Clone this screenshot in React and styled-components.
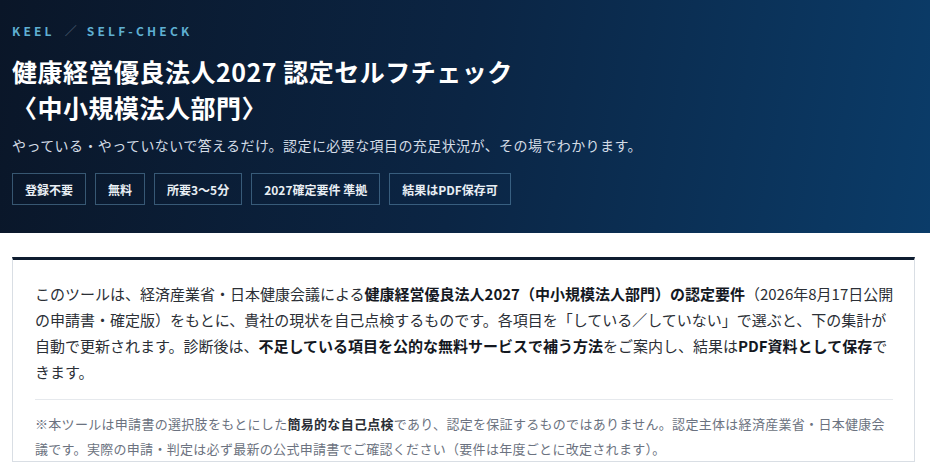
import React from "react"
import styled, { createGlobalStyle } from "styled-components"

const GlobalStyle = createGlobalStyle`
  html, body {
    margin: 0;
    padding: 0;
    background: #ffffff;
    font-family: "Noto Sans CJK JP", "Noto Sans", sans-serif;
  }
`

const Hero = styled.header`
  background: linear-gradient(100deg, #0a1628 0%, #0b2544 50%, #0b3c69 100%);
  padding: 22px 12px 28px;
  color: #ffffff;
`

const Crumb = styled.div`
  display: flex;
  align-items: center;
  gap: 10px;
  font-size: 12px;
  line-height: 18px;
  font-weight: 700;
  letter-spacing: 3.2px;
  color: #5fb0d2;
`

const CrumbSep = styled.span`
  color: #4a5d72;
  font-weight: 400;
  letter-spacing: 0;
`

const Title = styled.h1`
  margin: 13px 0 0;
  font-size: 25px;
  line-height: 36px;
  font-weight: 700;
  letter-spacing: 0.02em;
`

const Lead = styled.p`
  margin: 9px 0 0;
  font-size: 14px;
  line-height: 22px;
  letter-spacing: 0.03em;
  color: #d3dce6;
`

const Tags = styled.ul`
  display: flex;
  gap: 9px;
  margin: 17px 0 0;
  padding: 0;
  list-style: none;
`

const Tag = styled.li`
  border: 1px solid rgba(110, 165, 200, 0.45);
  padding: 0 12px;
  height: 30px;
  display: flex;
  align-items: center;
  font-size: 12px;
  font-weight: 700;
  color: #e8eef4;
`

const Card = styled.section`
  margin: 24px 15px 0 12px;
  border: 1px solid #d9dee4;
  border-top: 3px solid #0f1d30;
  padding: 21px 17px 0 22px;
`

const Intro = styled.p`
  margin: 0;
  font-size: 15px;
  line-height: 26px;
  color: #2b2f36;

  strong {
    font-weight: 700;
    color: #14181f;
  }
`

const Note = styled.p`
  margin: 14px 4px 0 0;
  padding-top: 11px;
  border-top: 1px solid #e6e9ed;
  font-size: 13px;
  line-height: 25px;
  letter-spacing: 0.3px;
  color: #6b7280;

  strong {
    font-weight: 700;
    color: #2b2f36;
  }
`

const tags = ["登録不要", "無料", "所要3〜5分", "2027確定要件 準拠", "結果はPDF保存可"]

const App = () => (
  <>
    <GlobalStyle />
    <Hero>
      <Crumb>
        <span>KEEL</span>
        <CrumbSep>／</CrumbSep>
        <span>SELF-CHECK</span>
      </Crumb>
      <Title>
        健康経営優良法人2027 認定セルフチェック
        <br />
        〈中小規模法人部門〉
      </Title>
      <Lead>やっている・やっていないで答えるだけ。認定に必要な項目の充足状況が、その場でわかります。</Lead>
      <Tags>
        {tags.map(t => (
          <Tag key={t}>{t}</Tag>
        ))}
      </Tags>
    </Hero>
    <Card>
      <Intro>
        このツールは、経済産業省・日本健康会議による<strong>健康経営優良法人2027（中小規模法人部門）の認定要件</strong>（2026年8月17日公開の申請書・確定版）をもとに、貴社の現状を自己点検するものです。各項目を「している／していない」で選ぶと、下の集計が自動で更新されます。診断後は、<strong>不足している項目を公的な無料サービスで補う方法</strong>をご案内し、結果は<strong>PDF資料として保存</strong>できます。
      </Intro>
      <Note>
        ※本ツールは申請書の選択肢をもとにした<strong>簡易的な自己点検</strong>であり、認定を保証するものではありません。認定主体は経済産業省・日本健康会議です。実際の申請・判定は必ず最新の公式申請書でご確認ください（要件は年度ごとに改定されます）。
      </Note>
    </Card>
  </>
)

export default App
